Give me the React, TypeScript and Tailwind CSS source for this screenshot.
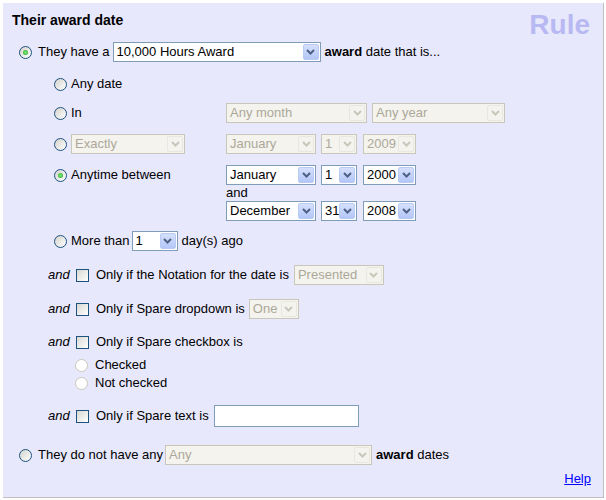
import clsx from 'clsx';

function Chevron({ disabled }: { disabled?: boolean }) {
  return (
    <svg width="9" height="6" viewBox="0 0 9 6" className="block">
      <path
        d="M1 1l3.5 3.5L8 1"
        fill="none"
        stroke={disabled ? '#c9c7ba' : '#4d6185'}
        strokeWidth="2"
      />
    </svg>
  );
}

function Select({ value, className, disabled }: { value: string; className: string; disabled?: boolean }) {
  return (
    <div
      className={clsx(
        'flex h-[20px] shrink-0 items-stretch border p-[1px]',
        disabled ? 'border-[#c9c7ba] bg-[#f4f3ee] text-[#aca899]' : 'border-[#7f9db9] bg-white text-black',
        className,
      )}
    >
      <span className="flex-1 overflow-hidden whitespace-nowrap pl-[2px] leading-[16px]">{value}</span>
      <span
        className={clsx(
          'flex w-[16px] shrink-0 items-center justify-center rounded-[2px] border',
          disabled
            ? 'border-[#e8e7e0] bg-[#f4f3ee]'
            : 'border-[#b9cbf5] bg-linear-to-b from-[#d6e0fc] to-[#b3c6f7]',
        )}
      >
        <Chevron disabled={disabled} />
      </span>
    </div>
  );
}

function Radio({ checked, disabled }: { checked?: boolean; disabled?: boolean }) {
  return (
    <span
      className={clsx(
        'flex h-[13px] w-[13px] shrink-0 items-center justify-center rounded-full border',
        disabled ? 'border-[#cac8bb] bg-white' : 'border-[#1c5180] bg-linear-to-br from-[#d4d3cc] to-white',
      )}
    >
      {checked && (
        <span className="h-[5px] w-[5px] rounded-full bg-[radial-gradient(circle,#7ef07e_0%,#1f9e1f_100%)]" />
      )}
    </span>
  );
}

function Checkbox() {
  return (
    <span className="h-[13px] w-[13px] shrink-0 border border-[#1c5180] bg-linear-to-br from-[#d8d8d2] to-white" />
  );
}

function DateSelects({ month, day, year, disabled }: { month: string; day: string; year: string; disabled?: boolean }) {
  return (
    <div className="flex items-center">
      <Select value={month} disabled={disabled} className="w-[90px]" />
      <Select value={day} disabled={disabled} className="ml-[5px] w-[36px]" />
      <Select value={year} disabled={disabled} className="ml-[6px] w-[53px]" />
    </div>
  );
}

export default function App() {
  return (
    <div className="h-[500px] w-[606px] bg-white pl-[3px] pt-[3px] font-['Liberation_Sans',Arial,sans-serif] text-[13px] leading-[16px] text-black">
      <div className="relative flex h-[495px] w-[601px] flex-col border-b border-r border-[#c0c0c0] bg-[#e8e8fc] pt-[9px]">
        {/* watermark */}
        <span className="absolute right-[13px] top-[8px] text-[28px] font-bold leading-[28px] text-[#b8b8f2]">Rule</span>

        <h2 className="ml-[9px] text-[14px] font-bold">Their award date</h2>

        <div className="ml-[16px] mt-[14px] flex h-[20px] items-center">
          <Radio checked />
          <span className="ml-[6px]">They have a</span>
          <Select value="10,000 Hours Award" className="ml-[3px] w-[208px]" />
          <span className="ml-[4px]">
            <b>award</b> date that is...
          </span>
        </div>

        <div className="ml-[51px] mt-[12px] flex h-[20px] items-center">
          <Radio />
          <span className="ml-[4px]">Any date</span>
        </div>

        <div className="ml-[51px] mt-[9px] flex h-[20px] items-center">
          <div className="flex w-[172px] items-center">
            <Radio />
            <span className="ml-[4px]">In</span>
          </div>
          <Select value="Any month" disabled className="w-[141px]" />
          <Select value="Any year" disabled className="ml-[5px] w-[133px]" />
        </div>

        <div className="ml-[51px] mt-[11px] flex h-[20px] items-center">
          <div className="flex w-[172px] items-center">
            <Radio />
            <Select value="Exactly" disabled className="ml-[4px] w-[114px]" />
          </div>
          <DateSelects month="January" day="1" year="2009" disabled />
        </div>

        <div className="ml-[51px] mt-[11px] flex">
          <div className="flex h-[20px] w-[172px] items-center">
            <Radio checked />
            <span className="ml-[4px]">Anytime between</span>
          </div>
          <div className="flex flex-col">
            <DateSelects month="January" day="1" year="2000" />
            <span className="h-[16px] leading-[16px]">and</span>
            <DateSelects month="December" day="31" year="2008" />
          </div>
        </div>

        <div className="ml-[51px] mt-[10px] flex h-[20px] items-center">
          <Radio />
          <span className="ml-[4px]">More than</span>
          <Select value="1" className="ml-[2px] w-[46px]" />
          <span className="ml-[4px]">day(s) ago</span>
        </div>

        <div className="ml-[45px] mt-[14px] flex h-[20px] items-center">
          <i className="w-[28px]">and</i>
          <Checkbox />
          <span className="ml-[7px]">Only if the Notation for the date is</span>
          <Select value="Presented" disabled className="ml-[5px] w-[90px]" />
        </div>

        <div className="ml-[45px] mt-[14px] flex h-[20px] items-center">
          <i className="w-[28px]">and</i>
          <Checkbox />
          <span className="ml-[7px]">Only if Spare dropdown is</span>
          <Select value="One" disabled className="ml-[4px] w-[50px]" />
        </div>

        <div className="ml-[45px] mt-[13px] flex h-[20px] items-center">
          <i className="w-[28px]">and</i>
          <Checkbox />
          <span className="ml-[7px]">Only if Spare checkbox is</span>
        </div>
        <div className="ml-[72px] mt-[4px] flex h-[18px] items-center">
          <Radio disabled />
          <span className="ml-[7px]">Checked</span>
        </div>
        <div className="ml-[72px] flex h-[18px] items-center">
          <Radio disabled />
          <span className="ml-[7px]">Not checked</span>
        </div>

        <div className="ml-[45px] mt-[13px] flex h-[22px] items-center">
          <i className="w-[28px]">and</i>
          <Checkbox />
          <span className="ml-[7px]">Only if Spare text is</span>
          <input type="text" className="ml-[5px] h-[22px] w-[145px] border border-[#7f9db9] bg-white outline-none" />
        </div>

        <div className="ml-[16px] mt-[18px] flex h-[20px] items-center">
          <Radio />
          <span className="ml-[6px]">They do not have any</span>
          <Select value="Any" disabled className="ml-[2px] w-[207px]" />
          <span className="ml-[4px]">
            <b>award</b> dates
          </span>
        </div>

        <div className="mt-[6px] flex justify-end pr-[12px]">
          <a href="#" className="text-[#0000ff] underline">
            Help
          </a>
        </div>
      </div>
    </div>
  );
}
